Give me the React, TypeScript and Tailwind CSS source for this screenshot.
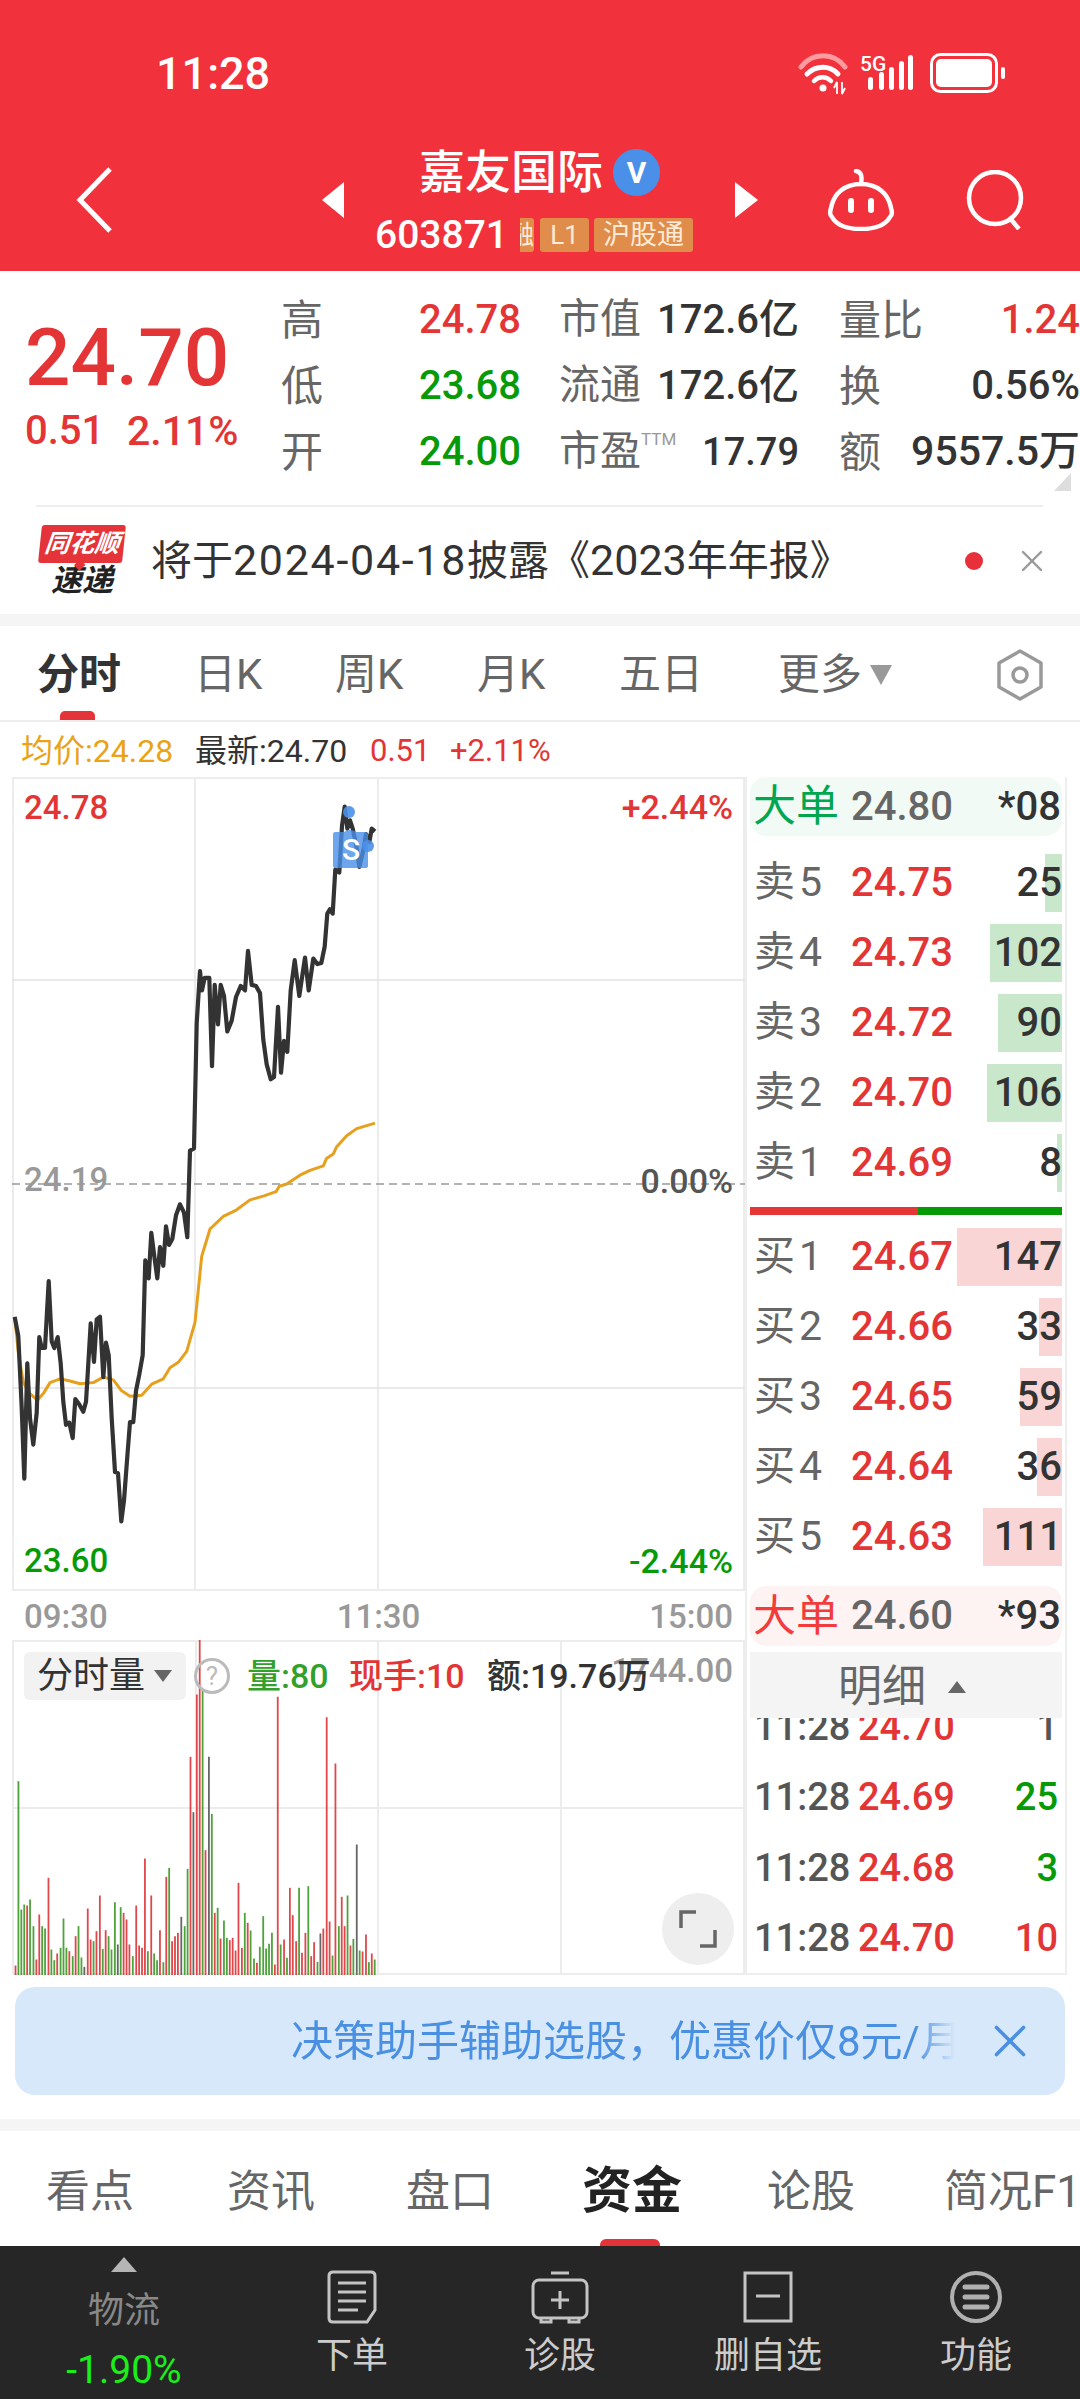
import React from "react";
import { X } from "lucide-react";

const red = "#e33535";
const green = "#079a07";

// traced from the reference, in crop coordinates (x/3, y/1.823)
const priceTrace = [44,1015,55,1050,65,1180,73,1310,82,1100,90,1200,100,1248,110,1190,118,1052,125,1072,135,1072,146,950,155,1060,163,1072,173,1052,182,1100,190,1170,198,1212,208,1208,218,1236,226,1165,238,1175,250,1188,258,1170,264,1110,272,1027,282,1097,290,1020,300,1015,310,1125,318,1062,326,1085,335,1200,345,1298,354,1300,364,1388,372,1350,382,1270,390,1207,400,1207,408,1150,418,1120,428,1085,436,912,446,945,454,862,464,910,472,945,480,888,490,922,498,850,507,884,517,873,528,830,540,810,552,825,562,870,570,712,582,708,590,480,600,385,606,420,614,397,628,397,636,558,644,410,654,482,662,410,672,430,682,495,695,475,708,432,722,412,735,420,744,348,755,410,768,412,780,425,790,510,800,555,812,582,822,578,834,450,843,570,852,512,862,532,872,420,884,365,898,430,915,360,926,420,940,362,952,372,964,370,974,340,982,280,990,272,998,280,1006,200,1018,205,1026,120,1034,85,1042,125,1050,110,1058,125,1070,160,1078,195,1090,165,1098,135,1108,150,1115,125,1125,130];
const avgTrace = [44,1015,55,1080,70,1135,90,1155,112,1167,130,1155,150,1135,180,1128,210,1132,240,1137,280,1135,310,1125,340,1130,365,1150,390,1160,425,1158,455,1138,490,1128,510,1108,535,1098,560,1078,585,1025,605,905,615,885,630,855,670,832,710,820,750,802,790,795,828,787,838,777,860,773,900,757,930,748,970,740,980,726,1000,718,1010,705,1040,685,1070,672,1125,662];

const toPoints = (trace: number[]) => {
  const out: string[] = [];
  for (let i = 0; i < trace.length; i += 2) {
    out.push(`${(trace[i] / 3 - 12).toFixed(1)},${(760 + trace[i + 1] / 1.823 - 777).toFixed(1)}`);
  }
  return out.join(" ");
};

// x, colour (r/g/k), top in crop coordinates
const volumeBars: [number, string, number][] = [
  [32,"r",1038],[38,"g",485],[44,"g",870],[50,"g",855],[56,"r",858],[62,"g",840],[69,"g",920],[75,"r",1020],[81,"r",885],[87,"g",920],[93,"g",927],[100,"r",775],[106,"g",990],[112,"g",1022],[118,"r",1002],[125,"g",985],[131,"g",897],[137,"g",985],[143,"r",995],[150,"g",1010],[156,"r",950],[162,"g",920],[168,"g",1014],[174,"k",1042],[181,"r",867],[187,"r",960],[193,"g",965],[199,"r",935],[206,"r",828],[212,"g",988],[218,"r",932],[224,"g",950],[230,"g",990],[237,"g",848],[243,"k",975],[249,"g",863],[255,"r",880],[261,"r",900],[267,"r",975],[274,"g",1010],[281,"r",858],[287,"r",978],[293,"r",985],[299,"r",717],[305,"g",995],[312,"r",828],[318,"g",1002],[324,"g",1022],[330,"r",932],[337,"g",1028],[343,"r",772],[349,"g",745],[355,"r",965],[361,"r",950],[367,"r",940],[374,"k",892],[381,"g",920],[387,"g",748],[393,"r",412],[399,"k",578],[406,"r",225],[412,"r",60],[418,"g",210],[424,"r",692],[431,"k",412],[437,"g",583],[443,"r",880],[449,"g",865],[455,"r",957],[462,"g",903],[468,"g",955],[474,"r",962],[480,"r",955],[486,"r",993],[492,"r",790],[499,"r",985],[505,"g",880],[511,"r",910],[517,"g",933],[524,"g",1017],[530,"r",1030],[536,"g",982],[543,"g",890],[549,"g",987],[555,"g",973],[561,"g",940],[567,"r",1035],[573,"r",232],[579,"g",975],[586,"r",960],[592,"g",1015],[598,"r",805],[604,"r",887],[611,"r",965],[617,"g",805],[623,"r",1000],[630,"r",940],[636,"g",800],[642,"r",1010],[648,"r",968],[655,"g",1027],[661,"k",942],[667,"r",927],[674,"r",293],[680,"r",906],[686,"g",1008],[692,"r",432],[699,"g",920],[705,"r",832],[711,"r",920],[717,"g",828],[723,"r",978],[729,"g",958],[736,"k",675],[742,"g",993],[748,"r",996],[755,"r",945],[761,"g",1028],[767,"r",1002],[773,"g",1020],
];
const barColors: Record<string, string> = { r: "#e0474a", g: "#4ea23c", k: "#666666" };

const asks = [
  { label: "卖5", price: "24.75", qty: "25", bar: 17 },
  { label: "卖4", price: "24.73", qty: "102", bar: 72 },
  { label: "卖3", price: "24.72", qty: "90", bar: 64 },
  { label: "卖2", price: "24.70", qty: "106", bar: 75 },
  { label: "卖1", price: "24.69", qty: "8", bar: 5 },
];
const bids = [
  { label: "买1", price: "24.67", qty: "147", bar: 105 },
  { label: "买2", price: "24.66", qty: "33", bar: 23 },
  { label: "买3", price: "24.65", qty: "59", bar: 42 },
  { label: "买4", price: "24.64", qty: "36", bar: 25 },
  { label: "买5", price: "24.63", qty: "111", bar: 79 },
];
const trades = [
  { price: "24.70", qty: "1", color: "#555555" },
  { price: "24.69", qty: "25", color: green },
  { price: "24.68", qty: "3", color: green },
  { price: "24.70", qty: "10", color: red },
];

const StatRow = ({ label, value, color, cap, capValue, capClass, right, rightValue, rightClass }: {
  label: string; value: string; color: string; cap: React.ReactNode; capValue: string; capClass?: string; right: string; rightValue: string; rightClass?: string;
}) => (
  <div className="flex h-[66px] items-center">
    <div className="flex w-[278px] items-center justify-between pr-[38px]">
      <span className="text-[42px] text-[#666666]">{label}</span>
      <span className="text-[40px] font-medium" style={{ color }}>{value}</span>
    </div>
    <div className="flex w-[280px] items-center justify-between pr-[40px]">
      <span className="flex text-[41px] text-[#666666]">{cap}</span>
      <span className={`font-medium text-[#333333] ${capClass ?? "text-[40px]"}`}>{capValue}</span>
    </div>
    <div className="flex w-[241px] items-center justify-between whitespace-nowrap">
      <span className="text-[42px] text-[#666666]">{right}</span>
      <span className={`font-medium ${rightClass ?? "text-[40px]"}`} style={{ color: rightValue === "1.24" ? red : "#333333" }}>{rightValue}</span>
    </div>
  </div>
);

const BookRow = ({ label, price, qty, bar, barClass }: { label: string; price: string; qty: string; bar: number; barClass: string }) => (
  <div className="relative flex h-[70px] items-center text-[40px] font-medium">
    <div className={`absolute right-0 top-[6px] h-[58px] ${barClass}`} style={{ width: bar }} />
    <span className="relative w-[101px] pl-[4px] text-[41px] font-normal tracking-[4px] text-[#666666]">{label}</span>
    <span className="relative" style={{ color: red }}>{price}</span>
    <span className="relative ml-auto text-[#333333]">{qty}</span>
  </div>
);

const Robot = () => (
  <svg width="70" height="62" viewBox="0 0 70 62" fill="none" stroke="white" strokeWidth="4.5">
    <path d="M30 2c6 1 6 6 5 13" strokeLinecap="round" />
    <path d="M35 15c-17 0-26 10-29 20-2 8-3 10 0 13 5 9 16 12 29 12s24-3 29-12c3-3 2-5 0-13-3-10-12-20-29-20z" />
    <rect x="22" y="29" width="6" height="15" rx="3" fill="white" stroke="none" />
    <rect x="42" y="29" width="6" height="15" rx="3" fill="white" stroke="none" />
  </svg>
);

export default function App() {
  return (
    <div className="relative h-[2400px] w-[1080px] overflow-hidden bg-white font-['Roboto','Noto_Sans_CJK_SC',sans-serif]">
      {/* Red header */}
      <header className="h-[271px] bg-[#f1323c] text-white">
        <div className="relative h-[147px]">
          <span className="absolute left-[156px] top-[48px] text-[45px] font-medium leading-[52px]">11:28</span>
          <svg className="absolute left-[796px] top-[50px]" width="215" height="46" viewBox="0 0 215 46" fill="none">
            {/* wifi */}
            <path d="M5 17C16 2 38 2 49 17" stroke="#ff9a9f" strokeWidth="5" strokeLinecap="round" />
            <path d="M11 24c9-9 23-9 31 0" stroke="white" strokeWidth="5" strokeLinecap="round" />
            <path d="M18 31c5-5 12-5 17 0" stroke="white" strokeWidth="4.5" strokeLinecap="round" />
            <circle cx="27" cy="38" r="3.5" fill="white" />
            <path d="M38 38l3-6v12M46 32v12l3-6" stroke="white" strokeWidth="1.8" />
            {/* signal */}
            <rect x="72" y="27" width="5" height="13" rx="2.5" fill="white" />
            <rect x="83" y="22" width="5" height="18" rx="2.5" fill="white" />
            <rect x="93" y="17" width="5" height="23" rx="2.5" fill="white" />
            <rect x="103" y="11" width="5" height="29" rx="2.5" fill="white" />
            <rect x="112" y="5" width="5" height="35" rx="2.5" fill="white" />
            {/* battery */}
            <rect x="135.5" y="4.5" width="65" height="37" rx="9" stroke="white" strokeWidth="3" />
            <rect x="140" y="9" width="56" height="28" rx="5" fill="white" />
            <rect x="205" y="17" width="4" height="12" rx="2" fill="white" />
          </svg>
          <span className="absolute left-[860px] top-[52px] text-[21px] font-medium leading-[24px]">5G</span>
        </div>
        <div className="flex h-[105px] items-center">
          <svg className="ml-[76px]" width="36" height="66" viewBox="0 0 36 66" fill="none">
            <path d="M34 2L4 33l30 31" stroke="white" strokeWidth="5" />
          </svg>
          <div className="ml-[210px] h-0 w-0 border-y-[18px] border-r-[22px] border-y-transparent border-r-white" />
          <div className="flex h-[105px] w-[391px] flex-col">
            <div className="flex h-[50px] items-center pl-[75px]">
              <span className="text-[46px] font-medium leading-[50px]">嘉友国际</span>
              <span className="ml-[10px] flex h-[47px] w-[47px] items-center justify-center rounded-full bg-[#4a90e8] text-[30px] font-bold">V</span>
            </div>
            <div className="mt-[21px] flex h-[34px] items-center pl-[31px]">
              <span className="w-[145px] text-[39px] font-medium leading-[34px]">603871</span>
              <div className="flex h-[34px] w-[14px] items-center justify-end overflow-hidden rounded-r-[3px] bg-[#e08d4b] text-[26px] text-[#fdebd8]">
                <span className="shrink-0">融</span>
              </div>
              <span className="ml-[6px] flex h-[34px] w-[49px] items-center justify-center rounded-[3px] bg-[#e08d4b] text-[26px] text-[#fdebd8]">L1</span>
              <span className="ml-[5px] flex h-[34px] w-[99px] items-center justify-center rounded-[3px] bg-[#e08d4b] text-[27px] text-[#fdebd8]">沪股通</span>
            </div>
          </div>
          <div className="h-0 w-0 border-y-[18px] border-l-[23px] border-y-transparent border-l-white" />
          <span className="ml-[68px]"><Robot /></span>
          <svg className="ml-[70px]" width="60" height="60" viewBox="0 0 60 60" fill="none" stroke="white" strokeWidth="4.5">
            <circle cx="29" cy="28" r="26" />
            <path d="M43 47l10 12" />
          </svg>
        </div>
      </header>

      {/* Quote */}
      <section className="relative flex h-[236px]">
        <div className="w-[281px] pl-[25px] pt-[47px]">
          <div className="text-[80px] font-medium leading-[80px]" style={{ color: red }}>24.70</div>
          <div className="mt-[13px] flex text-[40px] font-medium leading-[40px]" style={{ color: red }}>
            <span className="w-[102px]">0.51</span>
            <span className="text-[41px]">2.11%</span>
          </div>
        </div>
        <div className="pt-[16px]">
          <StatRow label="高" value="24.78" color={red} cap="市值" capValue="172.6亿" right="量比" rightValue="1.24" />
          <StatRow label="低" value="23.68" color={green} cap="流通" capValue="172.6亿" right="换" rightValue="0.56%" />
          <StatRow
            label="开"
            value="24.00"
            color={green}
            cap={<>市盈<span className="mt-[8px] text-[17px] leading-[20px] text-[#999999]">TTM</span></>}
            capValue="17.79"
            capClass="text-[38px]"
            right="额"
            rightValue="9557.5万"
            rightClass="text-[41px]"
          />
        </div>
        <div className="absolute bottom-[16px] left-[1054px] h-0 w-0 border-b-[18px] border-l-[17px] border-b-[#dddddd] border-l-transparent" />
        <div className="absolute bottom-0 left-[36px] right-[37px] border-b-2 border-[#eeeeee]" />
      </section>

      {/* News */}
      <section className="flex h-[107px] items-center">
        <div className="ml-[38px] flex w-[88px] shrink-0 flex-col items-center">
          <div className="relative flex h-[38px] w-[84px] -skew-x-6 items-center justify-center rounded-[3px] bg-[#e5333a]">
            <span className="text-[25px] font-bold italic leading-[30px] text-white">同花顺</span>
            <div className="absolute bottom-[-6px] left-[38px] h-[8px] w-[8px] rotate-45 bg-[#e5333a]" />
          </div>
          <span className="mt-[2px] text-[31px] font-bold italic leading-[32px] text-[#222222]">速递</span>
        </div>
        <span className="ml-[25px] whitespace-nowrap text-[41px] text-[#333333] [text-spacing-trim:space-all]">
          将于<span className="text-[43px] tracking-[1.7px]">2024-04-18</span>披露《<span className="text-[43px]">2023</span>年年报》
        </span>
        <span className="ml-auto h-[18px] w-[18px] shrink-0 rounded-full bg-[#e8303a]" />
        <X className="ml-[31px] mr-[30px] shrink-0 text-[#999999]" size={36} strokeWidth={1.6} />
      </section>
      <div className="h-[12px] bg-[#f5f5f5]" />

      {/* Period tabs */}
      <section className="relative flex h-[96px] items-center border-b-2 border-[#eeeeee] pl-[37px] pt-[3px] text-[42px] text-[#666666]">
        <span className="w-[157px] font-bold text-[#333333]">分时</span>
        <span className="w-[141px]">日K</span>
        <span className="w-[142px]">周K</span>
        <span className="w-[142px]">月K</span>
        <span className="w-[159px]">五日</span>
        <span>更多</span>
        <div className="ml-[8px] h-0 w-0 border-x-[11px] border-t-[20px] border-x-transparent border-t-[#999999]" />
        <svg className="ml-auto mr-[35px]" width="50" height="52" viewBox="0 0 50 52" fill="none" stroke="#999999" strokeWidth="3.5">
          <path d="M25 2l21 12v24L25 50 4 38V14z" strokeLinejoin="round" />
          <circle cx="25" cy="26" r="7" />
        </svg>
        <div className="absolute bottom-0 left-[60px] h-[9px] w-[35px] rounded-t-[5px] bg-[#e5333a]" />
      </section>

      {/* Legend */}
      <section className="flex h-[55px] items-center pl-[21px] pt-[3px] text-[31px]">
        <span className="w-[174px] text-[32px] text-[#e8a317]">均价:24.28</span>
        <span className="w-[175px] text-[32px] text-[#333333]">最新:24.70</span>
        <span className="w-[80px]" style={{ color: red }}>0.51</span>
        <span style={{ color: red }}>+2.11%</span>
      </section>

      <main className="flex h-[1198px]">
        <div className="w-[745px] pl-[12px]">
          {/* Price chart */}
          <div className="relative h-[814px] w-[733px] text-[33px] font-medium">
            <svg className="absolute inset-0" width="733" height="814" viewBox="0 0 733 814" fill="none">
              <path d="M1 0V814M0 1H733M0 813H733M183 0V814M366 0V814M732 0V814" stroke="#ececec" strokeWidth="2" />
              <path d="M0 203H733M0 611H733" stroke="#e4e4e4" strokeWidth="1.5" />
              <path d="M0 407H733" stroke="#999999" strokeWidth="1.5" strokeDasharray="8 5" />
              <polyline points={toPoints(avgTrace)} stroke="#e6a01e" strokeWidth="3" strokeLinejoin="round" />
              <polyline points={toPoints(priceTrace)} stroke="#333333" strokeWidth="4.2" strokeLinejoin="round" />
              {/* S marker */}
              <path d="M321 57q0-2 2-2h9q6-4 12 0h9q3 0 3 2v32q0 2-3 2h-30q-2 0-2-2z" fill="#4a90e8" opacity="0.8" />
              <circle cx="337" cy="35" r="6" fill="#4a90e8" opacity="0.9" />
              <circle cx="356" cy="69" r="6" fill="#4a90e8" opacity="0.9" />
              <text x="339" y="83" textAnchor="middle" fill="white" fontSize="30" fontFamily="Roboto">S</text>
            </svg>
            <span className="absolute left-[12px] top-[12px] leading-[38px]" style={{ color: red }}>24.78</span>
            <span className="absolute left-[12px] top-[384px] leading-[38px] text-[#999999]">24.19</span>
            <span className="absolute bottom-[11px] left-[12px] leading-[38px]" style={{ color: green }}>23.60</span>
            <span className="absolute right-[12px] top-[11px] text-[34px] leading-[38px]" style={{ color: red }}>+2.44%</span>
            <span className="absolute right-[12px] top-[385px] text-[34px] leading-[38px] text-[#555555]">0.00%</span>
            <span className="absolute bottom-[11px] right-[12px] text-[34px] leading-[38px]" style={{ color: green }}>-2.44%</span>
          </div>
          <div className="relative flex h-[49px] w-[733px] items-center justify-between px-[12px] pt-[2px] text-[33px] font-medium text-[#999999]">
            <span>09:30</span>
            <span>11:30</span>
            <span>15:00</span>
          </div>

          {/* Volume chart */}
          <div className="relative h-[335px] w-[733px]">
            <svg className="absolute inset-0" width="733" height="335" viewBox="0 0 733 335" fill="none">
              <path d="M1 0V335M0 1H733M0 334H733M184 0V335M366 0V335M549 0V335M732 0V335M0 168H733" stroke="#ececec" strokeWidth="2" />
              {volumeBars.map(([x, c, top]) => (
                <line key={x} x1={x / 2.063 - 12} x2={x / 2.063 - 12} y1={top / 3 - 20.5} y2="335" stroke={barColors[c]} strokeWidth="1.8" />
              ))}
            </svg>
            <div className="absolute left-[12px] top-[12px] flex h-[48px] w-[162px] items-center rounded-[6px] bg-[#f2f2f2] pl-[13px] text-[36px] text-[#333333]">
              分时量
              <div className="ml-[9px] h-0 w-0 border-x-[9px] border-t-[12px] border-x-transparent border-t-[#666666]" />
            </div>
            <div className="absolute left-[182px] top-[18px] flex h-[36px] w-[36px] items-center justify-center rounded-full border-[3px] border-[#bbbbbb] text-[26px] text-[#bbbbbb]">?</div>
            <div className="absolute right-[12px] top-[9px] text-[33px] font-medium leading-[44px] text-[#999999]">1744.00</div>
            <div className="absolute left-[235px] top-[12px] flex font-medium leading-[48px]">
              <span className="w-[102px] text-[34px] text-[#33a02c]">量:80</span>
              <span className="w-[138px] text-[34px]" style={{ color: red }}>现手:10</span>
              <span className="whitespace-nowrap text-[34px] text-[#333333]">额:19.76万</span>
            </div>
            <button className="absolute left-[650px] top-[253px] flex h-[72px] w-[72px] items-center justify-center rounded-full bg-[#eeeeee]">
              <svg width="40" height="40" viewBox="0 0 40 40" fill="none" stroke="#666666" strokeWidth="3.5">
                <path d="M3 19V3H18" />
                <path d="M37 21V37H22" />
              </svg>
            </button>
          </div>
        </div>

        {/* Order book */}
        <aside className="h-[1198px] w-[322px] border-x-2 border-b-2 border-[#eeeeee] px-[3px]">
          <div className="flex h-[59px] items-center rounded-[16px] bg-[#f2faf5] pl-[3px] pr-[1px] text-[40px] font-medium">
            <span className="w-[98px] text-[43px] font-normal text-[#00a650]">大单</span>
            <span className="text-[#666666]">24.80</span>
            <span className="ml-auto text-[#333333]">*08</span>
          </div>
          <div className="mt-[12px]">
            {asks.map((row) => (
              <BookRow key={row.label} {...row} barClass="bg-[#c9e7ca]" />
            ))}
          </div>
          <div className="mt-[9px] flex h-[8px]">
            <div className="w-[168px] bg-[#e53535]" />
            <div className="flex-1 bg-[#079a07]" />
          </div>
          <div className="mt-[7px]">
            {bids.map((row) => (
              <BookRow key={row.label} {...row} barClass="bg-[#f9d5d5]" />
            ))}
          </div>
          <div className="mt-[14px] flex h-[60px] items-center rounded-[16px] bg-[#fef3f3] pl-[3px] pr-[1px] text-[40px] font-medium">
            <span className="w-[98px] text-[43px] font-normal text-[#f23c3c]">大单</span>
            <span className="text-[#666666]">24.60</span>
            <span className="ml-auto text-[#333333]">*93</span>
          </div>
          <div className="mt-[6px] flex h-[66px] items-center justify-center bg-[#f4f4f4] pr-[8px] pt-[3px] text-[44px] text-[#666666]">
            明细
            <div className="ml-[22px] h-0 w-0 border-x-[9px] border-b-[12px] border-x-transparent border-b-[#666666]" />
          </div>
          <div className="h-[255px] overflow-hidden">
            <div className="-mt-[26px]">
              {trades.map((t, i) => (
                <div key={i} className="flex h-[70.5px] items-center pl-[4px] pr-[4px] text-[38px] font-medium">
                  <span className="w-[104px] text-[#555555]">11:28</span>
                  <span style={{ color: red }}>{t.price}</span>
                  <span className="ml-auto" style={{ color: t.color }}>{t.qty}</span>
                </div>
              ))}
            </div>
          </div>
        </aside>
      </main>

      {/* Promo banner */}
      <div className="mx-[15px] mt-[12px] flex h-[108px] items-center rounded-[20px] bg-[#d8e8fb] pl-[276px] pr-[28px]">
        <span className="w-[664px] overflow-hidden whitespace-nowrap text-[42px] text-[#4a90e2] [mask-image:linear-gradient(to_right,black_94%,transparent)]">决策助手辅助选股，优惠价仅8元/月</span>
        <X className="ml-auto shrink-0 text-[#4a90e2]" size={54} strokeWidth={1.6} />
      </div>
      <div className="mt-[24px] h-[12px] bg-[#f5f5f5]" />

      {/* Bottom tabs */}
      <nav className="relative flex h-[115px] items-center overflow-hidden whitespace-nowrap pl-[46px] pt-[6px] text-[44px] text-[#666666]">
        <span className="w-[181px] shrink-0">看点</span>
        <span className="w-[179px] shrink-0">资讯</span>
        <span className="w-[176px] shrink-0">盘口</span>
        <span className="w-[185px] shrink-0 text-[50px] font-bold text-[#222222]">资金</span>
        <span className="w-[177px] shrink-0">论股</span>
        <span className="shrink-0">简况F10</span>
        <div className="absolute bottom-0 left-[600px] h-[7px] w-[60px] rounded-t-[6px] bg-[#e5333a]" />
      </nav>

      {/* Bottom toolbar */}
      <footer className="grid h-[153px] grid-cols-[248px_208px_208px_208px_208px] bg-[#262626] text-[36px] text-[#cccccc]">
        <div className="flex flex-col items-center">
          <div className="mt-[11px] h-0 w-0 border-x-[13px] border-b-[15px] border-x-transparent border-b-[#b5b5b5]" />
          <span className="mt-[17px] leading-[44px] text-[#888888]">物流</span>
          <span className="mt-[15px] text-[39px] leading-[44px] text-[#19f019]">-1.90%</span>
        </div>
        <div className="flex flex-col items-center">
          <svg className="mt-[24px]" width="50" height="54" viewBox="0 0 50 54" fill="none" stroke="#c4c4c4" strokeWidth="3">
            <path d="M6 2h38q4 0 4 4v34l-8 12H6q-4 0-4-4V6q0-4 4-4z" />
            <path d="M11 13h28M11 22h28M11 31h28M11 40h20" />
          </svg>
          <span className="mt-[10px] leading-[44px]">下单</span>
        </div>
        <div className="flex flex-col items-center">
          <svg className="mt-[24px]" width="58" height="54" viewBox="0 0 58 54" fill="none" stroke="#c4c4c4" strokeWidth="3">
            <path d="M20 3h18" />
            <rect x="2" y="10" width="54" height="38" rx="6" />
            <path d="M10 48v4h10v-4M38 48v4h10v-4M29 21v18M20 30h18" />
          </svg>
          <span className="mt-[10px] leading-[44px]">诊股</span>
        </div>
        <div className="flex flex-col items-center">
          <svg className="mt-[24px]" width="50" height="54" viewBox="0 0 50 54" fill="none" stroke="#c4c4c4" strokeWidth="3">
            <rect x="2" y="3" width="46" height="48" />
            <path d="M13 26h24" />
          </svg>
          <span className="mt-[10px] leading-[44px]">删自选</span>
        </div>
        <div className="flex flex-col items-center">
          <svg className="mt-[24px]" width="54" height="54" viewBox="0 0 54 54" fill="none" stroke="#b0b0b0">
            <circle cx="27" cy="27" r="24" strokeWidth="4" />
            <path d="M16 17h22M16 27h22M16 37h22" strokeWidth="5" strokeLinecap="round" />
          </svg>
          <span className="mt-[10px] leading-[44px]">功能</span>
        </div>
      </footer>
    </div>
  );
}
